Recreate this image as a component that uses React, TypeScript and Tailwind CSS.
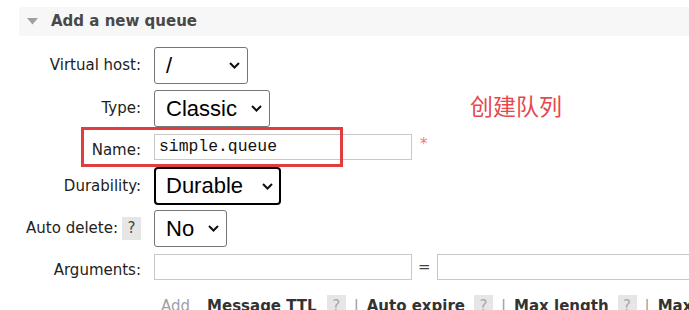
import React from "react";

const Chevron = () => (
  <svg width="11" height="7" viewBox="0 0 11 7" className="shrink-0">
    <path d="M1 1 L5.5 5.5 L10 1" fill="none" stroke="#111" strokeWidth="2" />
  </svg>
);

function Select({ value, w, strong }: { value: string; w: string; strong?: boolean }) {
  return (
    <div
      className={`${w} ${
        strong ? "border-2 border-black rounded-[4px] h-[38px] pl-[10px] pr-[6px]" : "border border-[#767676] rounded-[3px] h-[37px] pl-[11px] pr-[7px]"
      } bg-white flex items-center justify-between shrink-0`}
    >
      <span className="text-[22px] leading-none text-black" style={{ fontFamily: '"Liberation Sans", Arial, sans-serif' }}>
        {value}
      </span>
      <Chevron />
    </div>
  );
}

function Help({ dark }: { dark?: boolean }) {
  return (
    <span
      className={`inline-flex items-center justify-center w-[19px] h-[23px] bg-[#e6e6e6] text-[15px] ${
        dark ? "text-[#444]" : "text-[#a8a8a8]"
      }`}
    >
      ?
    </span>
  );
}

function Row({
  label,
  h,
  mt,
  children,
  help,
  low,
}: {
  label: string;
  h: string;
  mt: string;
  children: React.ReactNode;
  help?: boolean;
  low?: boolean;
}) {
  return (
    <div className={`flex items-center ${h} ${mt}`}>
      <div
        className={`w-[141px] shrink-0 flex items-center justify-end gap-[4px] text-[15px] text-[#222] ${low ? "pt-[7px]" : ""}`}
      >
        <span>{label}</span>
        {help && <Help dark />}
      </div>
      <div className="ml-[13px] flex items-center shrink-0">{children}</div>
    </div>
  );
}

export default function App() {
  return (
    <div
      className="relative w-[689px] h-[310px] overflow-hidden bg-white"
      style={{ fontFamily: '"DejaVu Sans", Verdana, sans-serif' }}
    >
      <div className="ml-[19px] mt-[7px] h-[29px] bg-[#f7f7f7] rounded-l-[3px] flex items-center pl-[8px]">
        <svg width="11" height="7" viewBox="0 0 11 7">
          <path d="M0 0 L11 0 L5.5 6.5 Z" fill="#a0a0a0" />
        </svg>
        <span className="ml-[13px] text-[15px] font-bold text-[#484848]">Add a new queue</span>
      </div>

      <div className="mt-[11px] flex flex-col">
        <Row label="Virtual host:" h="h-[37px]" mt="mt-0">
          <Select value="/" w="w-[94px]" />
        </Row>
        <Row label="Type:" h="h-[37px]" mt="mt-[6px]">
          <Select value="Classic" w="w-[116px]" />
        </Row>
        <Row label="Name:" h="h-[40px]" mt="mt-0" low>
          <div
            className="w-[258px] h-[26px] border border-[#c8c8c8] flex items-center pl-[4px] text-[16.4px] text-[#111]"
            style={{ fontFamily: '"Liberation Mono", "Courier New", monospace' }}
          >
            simple.queue
          </div>
          <span className="ml-[8px] text-[15px] text-[#f07878] -mt-[6px]">*</span>
        </Row>
        <Row label="Durability:" h="h-[38px]" mt="mt-0">
          <Select value="Durable" w="w-[127px]" strong />
        </Row>
        <Row label="Auto delete:" h="h-[37px]" mt="mt-[5px]" help>
          <Select value="No" w="w-[73px]" />
        </Row>
        <Row label="Arguments:" h="h-[26px]" mt="mt-[7px]" low>
          <div className="w-[258px] h-[26px] border border-[#c8c8c8] shrink-0" />
          <span className="ml-[6px] text-[15px] text-[#444]">=</span>
          <div className="ml-[6px] w-[300px] h-[26px] border border-[#c8c8c8] shrink-0" />
        </Row>
        <div className="flex items-center h-[22px] mt-[15px] ml-[161px] text-[15px] whitespace-nowrap">
          <span className="text-[#a0a0a0]">Add</span>
          <span className="ml-[17px] font-bold text-[#333]">Message TTL</span>
          <span className="ml-[10px]"><Help /></span>
          <span className="ml-[8px] text-[#999]">|</span>
          <span className="ml-[8px] font-bold text-[#333]">Auto expire</span>
          <span className="ml-[9px]"><Help /></span>
          <span className="ml-[8px] text-[#999]">|</span>
          <span className="ml-[8px] font-bold text-[#333]">Max length</span>
          <span className="ml-[9px]"><Help /></span>
          <span className="ml-[8px] text-[#999]">|</span>
          <span className="ml-[8px] font-bold text-[#333]">Max</span>
        </div>
      </div>

      <div className="absolute left-[81px] top-[127px] w-[262px] h-[40px] border-[3px] border-[#e23d3d]" />
      <div
        className="absolute left-[470px] top-[94px] text-[23px] text-[#e5484d] leading-none"
        style={{ fontFamily: '"Noto Sans CJK SC", sans-serif' }}
      >
        创建队列
      </div>
    </div>
  );
}
